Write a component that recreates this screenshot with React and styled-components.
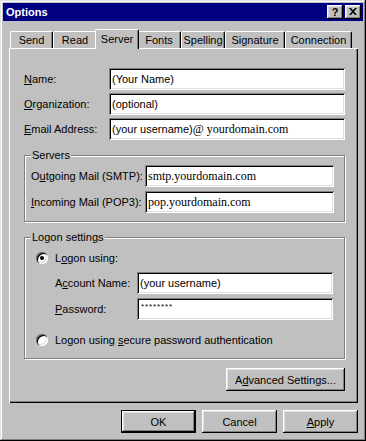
import React from "react";
import styled, { createGlobalStyle } from "styled-components";

const GlobalStyle = createGlobalStyle`
  html, body {
    margin: 0;
    padding: 0;
    background: #c0c0c0;
  }
  body {
    font-family: "Liberation Sans", Arial, sans-serif;
    font-size: 11px;
    color: #000;
  }
  * {
    box-sizing: border-box;
  }
`;

const raised = `
  box-shadow: inset -1px -1px #000, inset 1px 1px #fff, inset -2px -2px #808080,
    inset 2px 2px #dfdfdf;
`;

const Window = styled.div`
  width: 366px;
  height: 441px;
  padding: 3px;
  background: #c0c0c0;
  box-shadow: inset -1px -1px #000, inset 1px 1px #dfdfdf, inset -2px -2px #808080,
    inset 2px 2px #fff;
  display: flex;
  flex-direction: column;
`;

const TitleBar = styled.div`
  height: 18px;
  background: #000080;
  display: flex;
  align-items: center;
  gap: 2px;
  padding: 0 2px 0 3px;
`;

const Title = styled.span`
  flex: 1;
  color: #fff;
  font-weight: bold;
  font-size: 11px;
`;

const CaptionBtn = styled.button`
  width: 16px;
  height: 14px;
  padding: 0 0 1px;
  border: 0;
  background: #c0c0c0;
  ${raised}
  display: flex;
  align-items: center;
  justify-content: center;
  font: bold 11px "Liberation Sans", Arial, sans-serif;
  color: #000;
`;

const Body = styled.div`
  flex: 1;
  display: flex;
  flex-direction: column;
  padding: 8px 5px 0 6px;
`;

const TabRow = styled.div`
  height: 20px;
  display: flex;
  align-items: flex-end;
  padding-left: 1px;
  margin-bottom: -1px;
  position: relative;
  z-index: 1;
`;

const Tab = styled.div`
  width: ${(p) => (p.$active ? p.$w + 4 : p.$w)}px;
  height: ${(p) => (p.$active ? 20 : 17)}px;
  margin: ${(p) => (p.$active ? "0 -2px 0" : "0 0 1px")};
  padding-bottom: ${(p) => (p.$active ? 2 : 0)}px;
  background: #c0c0c0;
  border-top: 1px solid #fff;
  border-left: 1px solid #fff;
  border-right: 1px solid #000;
  border-radius: 2px 2px 0 0;
  box-shadow: inset -1px 0 #808080;
  display: flex;
  align-items: center;
  justify-content: center;
  position: relative;
  z-index: ${(p) => (p.$active ? 2 : 0)};
  white-space: nowrap;
`;

const Panel = styled.div`
  height: 355px;
  background: #c0c0c0;
  box-shadow: inset 1px 1px #fff, inset -1px -1px #000, inset -2px -2px #808080;
  padding: 20px 13px 0 15px;
  display: flex;
  flex-direction: column;
`;

const FormGrid = styled.div`
  display: grid;
  grid-template-columns: ${(p) => p.$cols};
  row-gap: ${(p) => p.$gap}px;
  align-items: center;
  margin: ${(p) => p.$margin || "0"};
`;

const Label = styled.span`
  white-space: nowrap;
`;

const U = styled.span`
  text-decoration: underline;
  text-underline-offset: 1px;
`;

const Field = styled.div`
  height: 22px;
  background: #fff;
  box-shadow: inset 1px 1px #808080, inset -1px -1px #fff, inset 2px 2px #000,
    inset -2px -2px #dfdfdf;
  padding: 0 3px;
  display: flex;
  align-items: center;
  white-space: nowrap;
  overflow: hidden;
  font-family: ${(p) =>
    p.$serif
      ? '"Liberation Serif", "Times New Roman", serif'
      : '"Liberation Sans", Arial, sans-serif'};
  font-size: ${(p) => (p.$serif ? 12 : 11)}px;
`;

const Serif = styled.span`
  font-family: "Liberation Serif", "Times New Roman", serif;
  font-size: 12px;
`;

const Stars = styled.span`
  font-size: 8px;
  letter-spacing: 0.9px;
  margin: -6px 0 0 1px;
`;

const GroupBox = styled.div`
  position: relative;
  margin-top: ${(p) => p.$top}px;
  border: 1px solid #808080;
  box-shadow: inset 1px 1px #fff, 1px 1px #fff;
  padding: ${(p) => p.$pad};
`;

const GroupCaption = styled.span`
  position: absolute;
  top: -7px;
  left: 6px;
  padding: 0 1px;
  line-height: 13px;
  background: #c0c0c0;
`;

const RadioRow = styled.div`
  height: 16px;
  display: flex;
  align-items: center;
  gap: 7px;
  margin-top: ${(p) => p.$top || 0}px;
`;

const Radio = styled.span`
  width: 12px;
  height: 12px;
  flex: none;
  border-radius: 50%;
  background: #fff;
  box-shadow: inset 1px 1px #808080, inset 2px 2px #000, inset -1px -1px #fff,
    inset -2px -2px #dfdfdf;
  display: flex;
  align-items: center;
  justify-content: center;

  &::after {
    content: "";
    display: ${(p) => (p.$checked ? "block" : "none")};
    width: 4px;
    height: 4px;
    border-radius: 50%;
    background: #000;
  }
`;

const ButtonRow = styled.div`
  display: flex;
  justify-content: flex-end;
  gap: 6px;
  margin-top: ${(p) => p.$top}px;
`;

const Button = styled.button`
  width: ${(p) => p.$w}px;
  height: 23px;
  padding: 0;
  border: 0;
  background: #c0c0c0;
  font: 11px "Liberation Sans", Arial, sans-serif;
  color: #000;
  ${(p) =>
    p.$default
      ? `box-shadow: inset 0 0 0 1px #000, inset -2px -2px #000, inset 2px 2px #fff,
          inset -3px -3px #808080, inset 3px 3px #dfdfdf;`
      : raised}
`;

const tabs = [
  { name: "Send", w: 43 },
  { name: "Read", w: 44 },
  { name: "Server", w: 40, active: true },
  { name: "Fonts", w: 44 },
  { name: "Spelling", w: 44 },
  { name: "Signature", w: 60 },
  { name: "Connection", w: 67 },
];

export default function App() {
  return (
    <>
      <GlobalStyle />
      <Window>
        <TitleBar>
          <Title>Options</Title>
          <CaptionBtn>?</CaptionBtn>
          <CaptionBtn>
            <svg width="8" height="7" viewBox="0 0 8 7">
              <path d="M0 0h2l2 2.3L6 0h2L5 3.5 8 7H6L4 4.7 2 7H0l3-3.5z" fill="#000" />
            </svg>
          </CaptionBtn>
        </TitleBar>

        <Body>
          <TabRow>
            {tabs.map((t) => (
              <Tab key={t.name} $w={t.w} $active={t.active}>
                {t.name}
              </Tab>
            ))}
          </TabRow>

          <Panel>
            <FormGrid $cols="85px 236px" $gap={3}>
              <Label>
                <U>N</U>ame:
              </Label>
              <Field>(Your Name)</Field>
              <Label>
                <U>O</U>rganization:
              </Label>
              <Field>(optional)</Field>
              <Label>
                <U>E</U>mail Address:
              </Label>
              <Field>
                (your username)<Serif>@ yourdomain.com</Serif>
              </Field>
            </FormGrid>

            <GroupBox $top={15} $pad="9px 10px 8px 6px">
              <GroupCaption>Servers</GroupCaption>
              <FormGrid $cols="114px 189px" $gap={4}>
                <Label>
                  O<U>u</U>tgoing Mail (SMTP):
                </Label>
                <Field $serif>smtp.yourdomain.com</Field>
                <Label>
                  <U>I</U>ncoming Mail (POP3):
                </Label>
                <Field $serif>pop.yourdomain.com</Field>
              </FormGrid>
            </GroupBox>

            <GroupBox $top={15} $pad="12px 11px 10px 11px">
              <GroupCaption>Logon settings</GroupCaption>
              <RadioRow>
                <Radio $checked />
                <Label>
                  L<U>o</U>gon using:
                </Label>
              </RadioRow>
              <FormGrid $cols="82px 196px" $gap={4} $margin="6px 0 0 19px">
                <Label>
                  A<U>c</U>count Name:
                </Label>
                <Field>(your username)</Field>
                <Label>
                  <U>P</U>assword:
                </Label>
                <Field>
                  <Stars>********</Stars>
                </Field>
              </FormGrid>
              <RadioRow $top={12}>
                <Radio />
                <Label>
                  Logon using <U>s</U>ecure password authentication
                </Label>
              </RadioRow>
            </GroupBox>

            <ButtonRow $top={9}>
              <Button $w={119}>
                A<U>d</U>vanced Settings...
              </Button>
            </ButtonRow>
          </Panel>

          <ButtonRow $top={7}>
            <Button $w={75} $default>
              OK
            </Button>
            <Button $w={75}>Cancel</Button>
            <Button $w={75}>
              <U>A</U>pply
            </Button>
          </ButtonRow>
        </Body>
      </Window>
    </>
  );
}
